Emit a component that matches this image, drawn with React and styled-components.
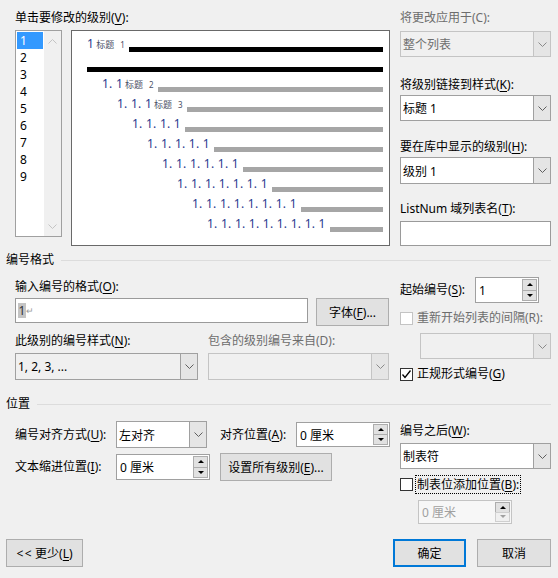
import React from "react";
import styled, { createGlobalStyle } from "styled-components";

const GlobalStyle = createGlobalStyle`
  html, body {
    margin: 0;
    padding: 0;
    background: #f0f0f0;
  }
  body {
    font-family: "Noto Sans", "Noto Sans CJK SC", sans-serif;
    font-size: 12px;
    color: #000;
  }
  * {
    box-sizing: border-box;
  }
`;

const Dialog = styled.div`
  width: 558px;
  height: 578px;
  padding: 10px 7px 0 15px;
  display: flex;
  flex-direction: column;
  overflow: hidden;
  background: #f0f0f0;
`;

const Columns = styled.div`
  display: grid;
  grid-template-columns: 375px 151px;
  column-gap: 10px;
  align-items: start;
`;

const Stack = styled.div`
  display: flex;
  flex-direction: column;
  align-items: flex-start;
`;

const Row = styled.div`
  display: flex;
  align-items: ${p => p.$align || "center"};
  margin-top: ${p => p.$mt || 0}px;
  margin-left: ${p => p.$ml || 0}px;
`;

const Label = styled.div`
  line-height: 16px;
  height: 16px;
  white-space: nowrap;
  color: ${p => (p.$disabled ? "#6d6d6d" : "#000")};
  margin-top: ${p => p.$mt || 0}px;
  margin-left: ${p => p.$ml || 0}px;
  width: ${p => (p.$w ? p.$w + "px" : "auto")};
  flex-shrink: 0;
`;

const U = styled.span`
  text-decoration: underline;
  text-underline-offset: 2px;
`;

const SectionHeader = styled.div`
  display: flex;
  align-items: center;
  gap: 7px;
  margin-left: -9px;
  margin-top: ${p => p.$mt || 0}px;
  line-height: 16px;
  height: 16px;
  &::after {
    content: "";
    flex: 1;
    height: 1px;
    background: #dcdcdc;
  }
`;

/* level list */

const LevelsRow = styled.div`
  display: flex;
  align-items: flex-start;
  gap: 9px;
  margin-top: 4px;
`;

const LevelList = styled.div`
  width: 47px;
  height: 207px;
  border: 1px solid #a0a0a0;
  background: #fff;
  display: flex;
`;

const LevelItems = styled.div`
  width: 28px;
  padding: 1px;
`;

const LevelItem = styled.div`
  height: 17px;
  line-height: 17px;
  width: 26px;
  padding-left: 3px;
  background: ${p => (p.$selected ? "#3399ff" : "transparent")};
  color: ${p => (p.$selected ? "#fff" : "#000")};
`;

const ListScroll = styled.div`
  width: 17px;
  background: #f0f0f0;
  display: flex;
  flex-direction: column;
  justify-content: space-between;
  align-items: center;
  padding: 8px 0 7px;
`;

/* preview */

const Preview = styled.div`
  width: 319px;
  height: 216px;
  border: 1px solid #696969;
  background: #fff;
  padding: 3px 6px 0 15px;
`;

const PreviewRow = styled.div`
  height: 20px;
  display: flex;
  align-items: flex-end;
  padding-left: ${p => p.$indent}px;
`;

const Num = styled.span`
  font-size: 12px;
  line-height: 12px;
  letter-spacing: 0.25px;
  color: #283a8e;
  margin-bottom: 4px;
  white-space: pre;
`;

const Tag = styled.span`
  font-size: 9px;
  line-height: 10px;
  color: #4a4f66;
  margin-left: 2px;
  margin-bottom: 4px;
  font-family: "Noto Sans CJK SC", sans-serif;
`;

const TagLevel = styled.span`
  font-size: 8px;
  line-height: 10px;
  color: #4a4f66;
  margin-left: 6px;
  margin-bottom: 4px;
`;

const Bar = styled.div`
  flex: 1;
  height: 5px;
  margin: 0 0 2px ${p => p.$gap}px;
  background: ${p => (p.$dark ? "#000" : "#a6a6a6")};
`;

/* controls */

const Combo = styled.div`
  display: flex;
  width: ${p => (p.$w ? p.$w + "px" : "100%")};
  height: ${p => p.$h || 26}px;
  margin-top: ${p => p.$mt || 0}px;
  margin-left: ${p => p.$ml || 0}px;
  border: 1px solid ${p => (p.$disabled ? "#c4c4c4" : "#a0a0a0")};
  background: ${p => p.$bg || "#fff"};
  flex-shrink: 0;
`;

const ComboText = styled.div`
  flex: 1;
  display: flex;
  align-items: center;
  padding-left: 2px;
  white-space: nowrap;
  color: ${p => (p.$disabled ? "#6d6d6d" : "#000")};
`;

const DropButton = styled.div`
  width: 17px;
  display: flex;
  align-items: center;
  justify-content: center;
  background: #e5e5e5;
  border-left: 1px solid ${p => (p.$disabled ? "#c4c4c4" : "#a0a0a0")};
`;

const TextBox = styled.div`
  width: ${p => (p.$w ? p.$w + "px" : "100%")};
  height: 25px;
  margin-top: ${p => p.$mt || 0}px;
  border: 1px solid #9a9a9a;
  background: #fff;
  display: flex;
  align-items: center;
  padding-left: 2px;
  flex-shrink: 0;
`;

const Selected = styled.span`
  background: #c4c4c4;
  color: #333;
  line-height: 15px;
  padding: 0 0.5px;
`;

const Pilcrow = styled.span`
  font-size: 9px;
  color: #9a9a9a;
`;

const Spinner = styled.div`
  display: flex;
  width: ${p => p.$w}px;
  height: ${p => p.$h || 26}px;
  margin-top: ${p => p.$mt || 0}px;
  margin-left: ${p => p.$ml || 0}px;
  border: 1px solid ${p => (p.$disabled ? "#c4c4c4" : "#a0a0a0")};
  background: ${p => (p.$disabled ? "#f7f7f7" : "#fff")};
  padding: 1px;
  flex-shrink: 0;
`;

const SpinText = styled.div`
  flex: 1;
  display: flex;
  align-items: center;
  padding-left: 2px;
  color: ${p => (p.$disabled ? "#a0a0a0" : "#000")};
  white-space: nowrap;
`;

const SpinButtons = styled.div`
  width: 15px;
  display: flex;
  flex-direction: column;
`;

const SpinBtn = styled.div`
  flex: 1;
  background: ${p => (p.$disabled ? "#f0f0f0" : "#e1e1e1")};
  border: 1px solid ${p => (p.$disabled ? "#cfcfcf" : "#adadad")};
  display: flex;
  align-items: center;
  justify-content: center;
  & + & {
    margin-top: -1px;
  }
`;

const Arrow = styled.div`
  width: 0;
  height: 0;
  border-left: 3px solid transparent;
  border-right: 3px solid transparent;
  ${p =>
    p.$down
      ? `border-top: 3px solid ${p.$color || "#000"};`
      : `border-bottom: 3px solid ${p.$color || "#000"};`}
`;

const Button = styled.div`
  width: ${p => p.$w}px;
  height: 28px;
  margin-left: ${p => p.$ml || 0}px;
  background: #e1e1e1;
  border: ${p => (p.$primary ? "2px solid #0078d7" : "1px solid #adadad")};
  display: flex;
  align-items: center;
  justify-content: center;
  white-space: nowrap;
  flex-shrink: 0;
`;

const Angles = styled.span`
  letter-spacing: 1.5px;
  margin-right: 2px;
`;

const CheckRow = styled.div`
  display: flex;
  align-items: center;
  height: ${p => p.$h || 16}px;
  margin-top: ${p => p.$mt || 0}px;
`;

const Box = styled.div`
  width: 13px;
  height: 13px;
  border: 1px solid ${p => (p.$disabled ? "#c4c4c4" : "#333")};
  background: #fff;
  margin-right: ${p => p.$gap || 4}px;
  display: flex;
  align-items: center;
  justify-content: center;
  flex-shrink: 0;
`;

const CheckText = styled.span`
  line-height: 16px;
  white-space: nowrap;
  color: ${p => (p.$disabled ? "#6d6d6d" : "#000")};
`;

const FocusText = styled.span`
  line-height: 17px;
  border: 1px dotted #000;
  padding: 0 1px;
  white-space: nowrap;
`;

const FormatGrid = styled.div`
  display: grid;
  grid-template-columns: 183px 181px;
  column-gap: 10px;
  row-gap: 4px;
  margin-top: 7px;
`;

const Footer = styled.div`
  display: flex;
  justify-content: space-between;
  margin-left: -9px;
  margin-top: 15px;
`;

const ButtonGroup = styled.div`
  display: flex;
  gap: 11px;
`;

function Chevron({ color = "#5f5f5f", up = false }) {
  return (
    <svg width="9" height="5" viewBox="0 0 9 5">
      <polyline
        points={up ? "0.5,4.5 4.5,0.5 8.5,4.5" : "0.5,0.5 4.5,4.5 8.5,0.5"}
        fill="none"
        stroke={color}
        strokeWidth="1"
      />
    </svg>
  );
}

function Check() {
  return (
    <svg width="11" height="11" viewBox="0 0 11 11">
      <polyline points="1.5,5.5 4,8.5 9.5,1.5" fill="none" stroke="#000" strokeWidth="1.3" />
    </svg>
  );
}

function DropDown({ value, w, h, mt, ml, bg, disabled }) {
  return (
    <Combo $w={w} $h={h} $mt={mt} $ml={ml} $bg={bg} $disabled={disabled}>
      <ComboText $disabled={disabled}>{value}</ComboText>
      <DropButton $disabled={disabled}>
        <Chevron color={disabled ? "#8a8a8a" : "#5f5f5f"} />
      </DropButton>
    </Combo>
  );
}

function SpinBox({ value, w, h, mt, ml, disabled }) {
  return (
    <Spinner $w={w} $h={h} $mt={mt} $ml={ml} $disabled={disabled}>
      <SpinText $disabled={disabled}>{value}</SpinText>
      <SpinButtons>
        <SpinBtn>
          <Arrow />
        </SpinBtn>
        <SpinBtn $disabled={disabled}>
          <Arrow $down $color={disabled ? "#a0a0a0" : "#000"} />
        </SpinBtn>
      </SpinButtons>
    </Spinner>
  );
}

const levels = ["1", "2", "3", "4", "5", "6", "7", "8", "9"];

function numberFor(depth) {
  return Array.from({ length: depth }, () => "1").join(". ");
}

function PreviewPane() {
  const rows = [];
  rows.push(
    <PreviewRow key="l1" $indent={0}>
      <Num>1</Num>
      <Tag>标题</Tag>
      <TagLevel>1</TagLevel>
      <Bar $dark $gap={4} />
    </PreviewRow>
  );
  rows.push(
    <PreviewRow key="l1b" $indent={0}>
      <Bar $dark $gap={0} />
    </PreviewRow>
  );
  for (let depth = 2; depth <= 9; depth++) {
    rows.push(
      <PreviewRow key={depth} $indent={(depth - 1) * 15}>
        <Num>{numberFor(depth)}</Num>
        {depth <= 3 ? (
          <>
            <Tag>标题</Tag>
            <TagLevel>{depth}</TagLevel>
          </>
        ) : null}
        <Bar $gap={4} />
      </PreviewRow>
    );
  }
  return <Preview>{rows}</Preview>;
}

export default function App() {
  return (
    <Dialog>
      <GlobalStyle />

      <Columns>
        <Stack>
          <Label>
            单击要修改的级别(<U>V</U>):
          </Label>
          <LevelsRow>
            <LevelList>
              <LevelItems>
                {levels.map(l => (
                  <LevelItem key={l} $selected={l === "1"}>
                    {l}
                  </LevelItem>
                ))}
              </LevelItems>
              <ListScroll>
                <Chevron up color="#c4c4c4" />
                <Chevron color="#c4c4c4" />
              </ListScroll>
            </LevelList>
            <PreviewPane />
          </LevelsRow>
        </Stack>

        <Stack>
          <Label $disabled>将更改应用于(C):</Label>
          <DropDown value="整个列表" mt={5} bg="#f0f0f0" disabled />
          <Label $mt={20}>
            将级别链接到样式(<U>K</U>):
          </Label>
          <DropDown value="标题 1" mt={2} />
          <Label $mt={18}>
            要在库中显示的级别(<U>H</U>):
          </Label>
          <DropDown value="级别 1" mt={2} h={27} />
          <Label $mt={17}>
            ListNum 域列表名(<U>T</U>):
          </Label>
          <TextBox $mt={4} />
        </Stack>
      </Columns>

      <SectionHeader $mt={6}>编号格式</SectionHeader>

      <Columns>
        <Stack>
          <Label $mt={11}>
            输入编号的格式(<U>O</U>):
          </Label>
          <Row $mt={3} $align="flex-start">
            <TextBox $w={293}>
              <Selected>1</Selected>
              <Pilcrow>↵</Pilcrow>
            </TextBox>
            <Button $w={73} $ml={8}>
              字体(<U>F</U>)...
            </Button>
          </Row>
          <FormatGrid>
            <Label>
              此级别的编号样式(<U>N</U>):
            </Label>
            <Label $disabled>包含的级别编号来自(D):</Label>
            <DropDown value="1, 2, 3, ..." h={27} bg="#f0f0f0" />
            <DropDown value="" h={27} bg="#f0f0f0" disabled />
          </FormatGrid>
        </Stack>

        <Stack>
          <Row $mt={9}>
            <Label $w={75}>
              起始编号(<U>S</U>):
            </Label>
            <SpinBox value="1" w={64} />
          </Row>
          <CheckRow $mt={7}>
            <Box $disabled />
            <CheckText $disabled>重新开始列表的间隔(R):</CheckText>
          </CheckRow>
          <DropDown value="" w={131} ml={20} mt={7} bg="#f0f0f0" disabled />
          <CheckRow $mt={7}>
            <Box>
              <Check />
            </Box>
            <CheckText>
              正规形式编号(<U>G</U>)
            </CheckText>
          </CheckRow>
        </Stack>
      </Columns>

      <SectionHeader $mt={14}>位置</SectionHeader>

      <Columns>
        <Stack>
          <Row $mt={9}>
            <Label $w={101}>
              编号对齐方式(<U>U</U>):
            </Label>
            <DropDown value="左对齐" w={91} h={27} />
            <Label $w={76} $ml={13}>
              对齐位置(<U>A</U>):
            </Label>
            <SpinBox value="0 厘米" w={94} h={25} />
          </Row>
          <Row $mt={5}>
            <Label $w={101}>
              文本缩进位置(<U>I</U>):
            </Label>
            <SpinBox value="0 厘米" w={94} />
            <Button $w={112} $ml={10}>
              设置所有级别(<U>E</U>)...
            </Button>
          </Row>
        </Stack>

        <Stack>
          <Label $mt={11}>
            编号之后(<U>W</U>):
          </Label>
          <DropDown value="制表符" mt={4} />
          <CheckRow $mt={6} $h={19}>
            <Box $gap={2} />
            <FocusText>
              制表位添加位置(<U>B</U>):
            </FocusText>
          </CheckRow>
          <SpinBox value="0 厘米" w={94} h={24} mt={6} ml={18} disabled />
        </Stack>
      </Columns>

      <Footer>
        <Button $w={77}>
          <Angles>&lt;&lt;</Angles>更少(<U>L</U>)
        </Button>
        <ButtonGroup>
          <Button $w={73} $primary>
            确定
          </Button>
          <Button $w={74}>取消</Button>
        </ButtonGroup>
      </Footer>
    </Dialog>
  );
}
